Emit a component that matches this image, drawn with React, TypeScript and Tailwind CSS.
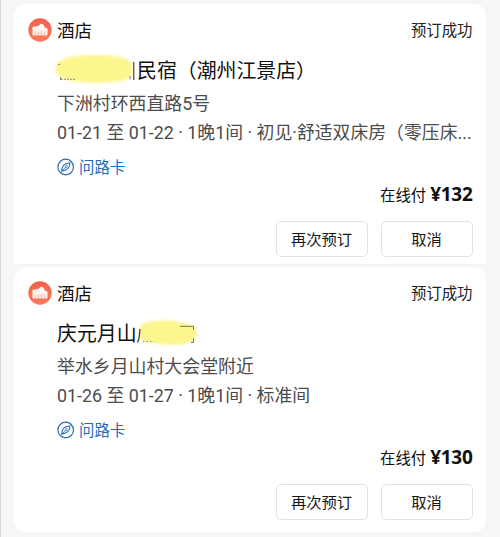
import React from "react";

type Booking = {
  title: React.ReactNode;
  address: string;
  detail: string;
  price: string;
  offset: string;
};

function HotelIcon() {
  return (
    <svg width="24" height="24" viewBox="0 0 24 24" className="block shrink-0">
      <defs>
        <linearGradient id="hotelFill" x1="0" y1="0" x2="0" y2="1">
          <stop offset="0" stopColor="#f2604c" />
          <stop offset="1" stopColor="#f77a5c" />
        </linearGradient>
        <linearGradient id="hotelBody" x1="0" y1="0" x2="0" y2="1">
          <stop offset="0" stopColor="#ffffff" />
          <stop offset="1" stopColor="#ffe3de" />
        </linearGradient>
      </defs>
      <circle cx="12" cy="12" r="11.7" fill="url(#hotelFill)" />
      <path
        d="M4.4 16.6V9.8Q4.4 9 5.3 8.8L10.2 8L12.6 6Q13.4 5.4 14.2 5.9L15.8 7Q16.3 7.4 16.3 8.2V9.2L18.8 10.2Q19.6 10.6 19.6 11.5V16.6Q19.6 17.4 18.9 17.4H5.2Q4.4 17.4 4.4 16.6Z"
        fill="url(#hotelBody)"
      />
      <path d="M7.6 14.6V17.4M10.4 13.6V17.4M13.4 13V17.4M16.4 14V17.4" stroke="#fbb5aa" strokeWidth="0.8" />
    </svg>
  );
}

function CompassIcon() {
  return (
    <svg width="18" height="18" viewBox="0 0 18 18" fill="none" stroke="#2d70b3" className="block shrink-0">
      <circle cx="8.7" cy="9" r="7.8" strokeWidth="1.2" />
      <path d="M13 4.8Q8.1 5.4 6.3 7.6Q4.8 9.6 4.7 13.1Q9.1 12.5 11.1 10.4Q12.8 8.5 13 4.8Z" strokeWidth="1.1" />
      <path d="M5 12.8L8.6 9.2" strokeWidth="0.9" />
      <circle cx="9.3" cy="8.5" r="1" strokeWidth="0.8" />
    </svg>
  );
}

function Button({ children }: { children: React.ReactNode }) {
  return (
    <button className="flex h-9 w-[92px] items-center justify-center rounded-[5px] border border-[#e2e2e2] bg-white pb-0.5 text-[15.3px] text-[#161616]">
      {children}
    </button>
  );
}

function BookingCard({ title, address, detail, price, offset }: Booking) {
  return (
    <section className={"bg-white pl-[14px] pr-[13.5px] " + offset}>
      <div className="flex h-6 items-center">
        <HotelIcon />
        <span className="ml-[5px] text-[17.5px] leading-6 text-[#111]">酒店</span>
        <span className="-mt-0.5 ml-auto text-[15.4px] leading-6 text-[#222]">预订成功</span>
      </div>
      <div className="pl-[29px]">
        <h2 className="mt-[14px] flex h-7 items-center text-[19.9px] leading-7 text-[#111]">{title}</h2>
        <p className="mt-[6px] h-7 font-['Roboto','Noto_Sans_CJK_SC',sans-serif] text-[17.9px] leading-7 text-[#4c4c4c]">
          {address}
        </p>
        <p className="h-7 whitespace-nowrap font-['Roboto','Noto_Sans_CJK_SC',sans-serif] text-[17.85px] leading-[29px] text-[#4c4c4c]">
          {detail}
        </p>
        <div className="mt-[9px] flex h-6 items-center">
          <CompassIcon />
          <span className="-mt-0.5 ml-1 text-[15.4px] leading-6 text-[#1c6cb8]">问路卡</span>
        </div>
      </div>
      <div className="mt-[3px] flex h-6 items-center justify-end text-[#111]">
        <span className="text-[15.4px] leading-6">在线付</span>
        <span className="ml-1 font-['Noto_Sans',sans-serif] text-[19px] font-bold leading-6 tracking-[-0.3px]">
          {price}
        </span>
      </div>
      <div className="mt-[15px] flex justify-end gap-[13px]">
        <Button>再次预订</Button>
        <Button>取消</Button>
      </div>
    </section>
  );
}

function FirstTitle() {
  return (
    <>
      <span className="relative h-7 w-20 shrink-0">
        <svg width="86" height="34" viewBox="0 0 86 34" className="absolute -left-1 -top-[3px]">
          <defs>
            <filter id="softA" x="-10%" y="-20%" width="120%" height="140%">
              <feGaussianBlur stdDeviation="1.4" />
            </filter>
          </defs>
          <path
            d="M16 4Q42 0 68 4Q80 7 80 17Q79 26 68 28Q43 32 18 28Q3 24 2 16Q4 7 16 4Z"
            fill="#fdf58d"
            filter="url(#softA)"
          />
          <path d="M80.8 9V27" stroke="#333" strokeWidth="1.1" />
          <path d="M77 23V26.5M5 12L7 11M7.6 24V27" stroke="#82794a" strokeWidth="1" />
          <path d="M8 26.3H22" stroke="#8a8252" strokeWidth="0.9" strokeDasharray="2 1" />
        </svg>
      </span>
      <span className="-mt-px whitespace-nowrap">民宿（潮州江景店）</span>
    </>
  );
}

function SecondTitle() {
  return (
    <>
      <span>庆元月山</span>
      <span className="relative h-7 w-16 shrink-0">
        <svg width="70" height="34" viewBox="0 0 70 34" className="absolute -left-1 -top-[2px]">
          <defs>
            <filter id="softB" x="-10%" y="-20%" width="120%" height="140%">
              <feGaussianBlur stdDeviation="1.4" />
            </filter>
          </defs>
          <path
            d="M16 5Q34 1 50 6Q65 9 64 17Q62 26 46 28Q26 28 10 24Q4 20 7 10Q9 6 16 5Z"
            fill="#fdf58d"
            filter="url(#softB)"
          />
          <path d="M7 12L6.4 18Q6 23 4.5 25.5" stroke="#333" strokeWidth="1.2" fill="none" />
          <path d="M47 9.3H60.5V13M60.5 21.5V25.5H58" stroke="#77734c" strokeWidth="1" fill="none" />
          <path d="M10 24.5H21" stroke="#8a8252" strokeWidth="0.9" strokeDasharray="1.5 2" />
        </svg>
      </span>
    </>
  );
}

export default function App() {
  return (
    <main className="h-[537px] w-[500px] overflow-hidden border-l border-[#d8d8d8] bg-[#f6f6f6] pl-[13px] pr-[14px] pt-1 font-['Noto_Sans_CJK_SC',sans-serif]">
      <BookingCard
        offset="h-[260px] pt-[14px] rounded-t-xl"
        title={<FirstTitle />}
        address="下洲村环西直路5号"
        detail="01-21 至 01-22 · 1晚1间 · 初见·舒适双床房（零压床..."
        price="¥132"
      />
      <BookingCard
        offset="mt-[3px] h-[265px] pt-[14px] rounded-xl"
        title={<SecondTitle />}
        address="举水乡月山村大会堂附近"
        detail="01-26 至 01-27 · 1晚1间 · 标准间"
        price="¥130"
      />
    </main>
  );
}
